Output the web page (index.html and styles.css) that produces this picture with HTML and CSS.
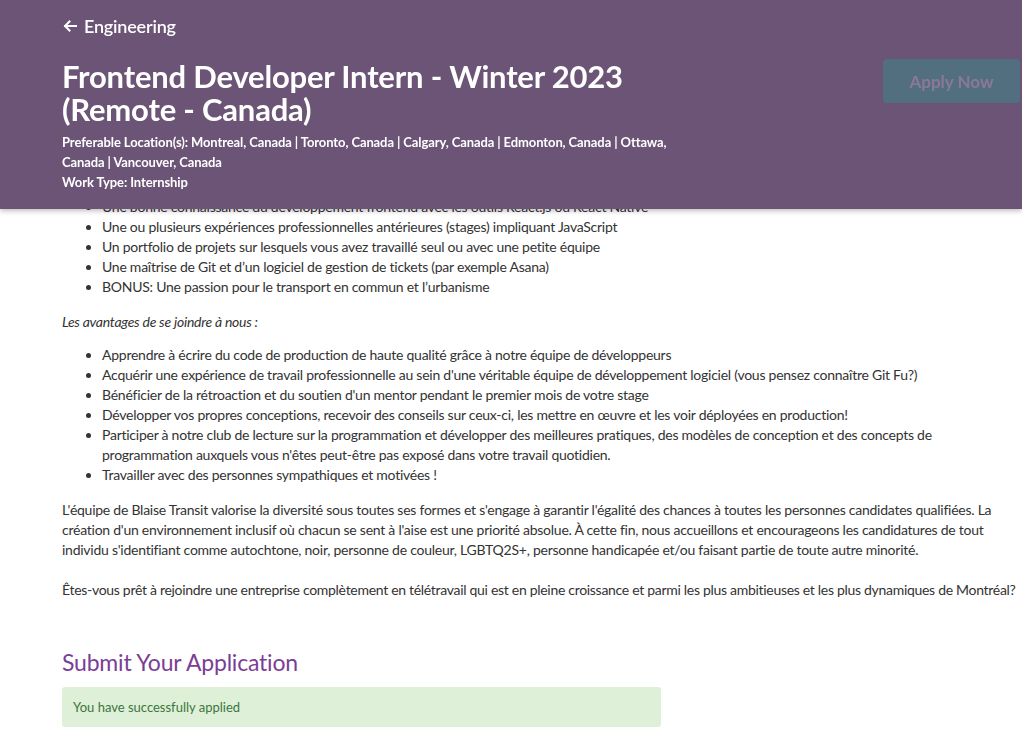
FILE: index.html
```html
<!DOCTYPE html>
<html lang="fr">
<head>
<meta charset="utf-8">
<title>Frontend Developer Intern - Winter 2023</title>
<link rel="stylesheet" href="styles.css">
</head>
<body>
<header class="job-header">
  <div class="header-inner">
    <div class="header-main">
      <a class="back-link" href="#"><svg class="back-icon" viewBox="0 0 16 16" width="16" height="16"><path d="M14 8H3M7.5 3.5L3 8l4.5 4.5" fill="none" stroke="#fff" stroke-width="2" stroke-linecap="square"/></svg>Engineering</a>
      <h1 class="job-title">Frontend Developer Intern - Winter 2023 (Remote - Canada)</h1>
      <div class="job-meta">
        <div>Preferable Location(s): Montreal, Canada | Toronto, Canada | Calgary, Canada | Edmonton, Canada | Ottawa, Canada | Vancouver, Canada</div>
        <div>Work Type: Internship</div>
      </div>
    </div>
    <button class="apply-btn" disabled>Apply Now</button>
  </div>
</header>

<main class="content">
  <ul class="list">
    <li>Une bonne connaissance du développement frontend avec les outils React.js ou React Native</li>
    <li>Une ou plusieurs expériences professionnelles antérieures (stages) impliquant JavaScript</li>
    <li>Un portfolio de projets sur lesquels vous avez travaillé seul ou avec une petite équipe</li>
    <li>Une maîtrise de Git et d’un logiciel de gestion de tickets (par exemple Asana)</li>
    <li>BONUS: Une passion pour le transport en commun et l’urbanisme</li>
  </ul>
  <p class="lead"><em>Les avantages de se joindre à nous :</em></p>
  <ul class="list">
    <li>Apprendre à écrire du code de production de haute qualité grâce à notre équipe de développeurs</li>
    <li>Acquérir une expérience de travail professionnelle au sein d'une véritable équipe de développement logiciel (vous pensez connaître Git Fu?)</li>
    <li>Bénéficier de la rétroaction et du soutien d'un mentor pendant le premier mois de votre stage</li>
    <li>Développer vos propres conceptions, recevoir des conseils sur ceux-ci, les mettre en œuvre et les voir déployées en production!</li>
    <li>Participer à notre club de lecture sur la programmation et développer des meilleures pratiques, des modèles de conception et des concepts de programmation auxquels vous n'êtes peut-être pas exposé dans votre travail quotidien.</li>
    <li>Travailler avec des personnes sympathiques et motivées !</li>
  </ul>
  <p class="para">L'équipe de Blaise Transit valorise la diversité sous toutes ses formes et s'engage à garantir l'égalité des chances à toutes les personnes candidates qualifiées. La création d'un environnement inclusif où chacun se sent à l'aise est une priorité absolue. À cette fin, nous accueillons et encourageons les candidatures de tout individu s'identifiant comme autochtone, noir, personne de couleur, LGBTQ2S+, personne handicapée et/ou faisant partie de toute autre minorité.</p>
  <p class="para para-single">Êtes-vous prêt à rejoindre une entreprise complètement en télétravail qui est en pleine croissance et parmi les plus ambitieuses et les plus dynamiques de Montréal?</p>

  <section class="apply-section">
    <h2 class="apply-title">Submit Your Application</h2>
    <div class="alert-success">You have successfully applied</div>
  </section>
</main>
</body>
</html>
```
FILE: styles.css
```css
* { box-sizing: border-box; }
html, body { margin: 0; padding: 0; }
body {
  font-family: "Lato", "Open Sans", sans-serif;
  font-size: 14px;
  line-height: 20px;
  color: #333;
  background: #fff;
  overflow: hidden;
}
.job-header {
  position: fixed;
  top: 0; left: 0; right: 0;
  height: 209px;
  background: #6b5476;
  color: #fff;
  box-shadow: 0 2px 5px rgba(0,0,0,0.25);
  z-index: 10;
}
.header-inner {
  display: flex;
  justify-content: space-between;
  align-items: flex-start;
  padding: 14px 2px 0 62px;
}
.header-main { width: 640px; }
.back-link {
  display: flex;
  align-items: center;
  gap: 6px;
  color: #fff;
  text-decoration: none;
  font-size: 18px;
  line-height: 24px;
  font-weight: 600;
  letter-spacing: -0.2px;
}
.back-icon { display: block; }
.job-title {
  margin: 22px 0 0;
  font-size: 31px;
  line-height: 33px;
  font-weight: 700;
  letter-spacing: -0.2px;
}
.job-meta {
  margin-top: 6px;
  font-size: 13px;
  line-height: 20px;
  font-weight: 700;
  letter-spacing: -0.1px;
}
.apply-btn {
  margin-top: 45px;
  width: 137px;
  height: 44px;
  border: none;
  border-radius: 4px;
  background: #526f7f;
  color: #8b7898;
  font-family: inherit;
  font-size: 17px;
  font-weight: 700;
}
.content {
  padding: 197px 0 0 62px;
  letter-spacing: -0.25px;
}
.list {
  margin: 0 0 15px;
  padding-left: 40px;
}
.list li { line-height: 20px; }
.lead { margin: 0 0 13px; }
.para { margin: 0 0 20px; }
.para-single {
  white-space: nowrap;
  letter-spacing: -0.3px;
}
.apply-section { margin-top: 47px; }
.apply-title {
  margin: 0 0 10px;
  font-size: 23px;
  line-height: 30px;
  font-weight: 400;
  color: #7a3e97;
  letter-spacing: -0.2px;
}
.alert-success {
  width: 599px;
  padding: 10px 11px;
  background: #dff0d8;
  color: #3c763d;
  border-radius: 3px;
  font-size: 13px;
  line-height: 20px;
  letter-spacing: 0;
}
```
